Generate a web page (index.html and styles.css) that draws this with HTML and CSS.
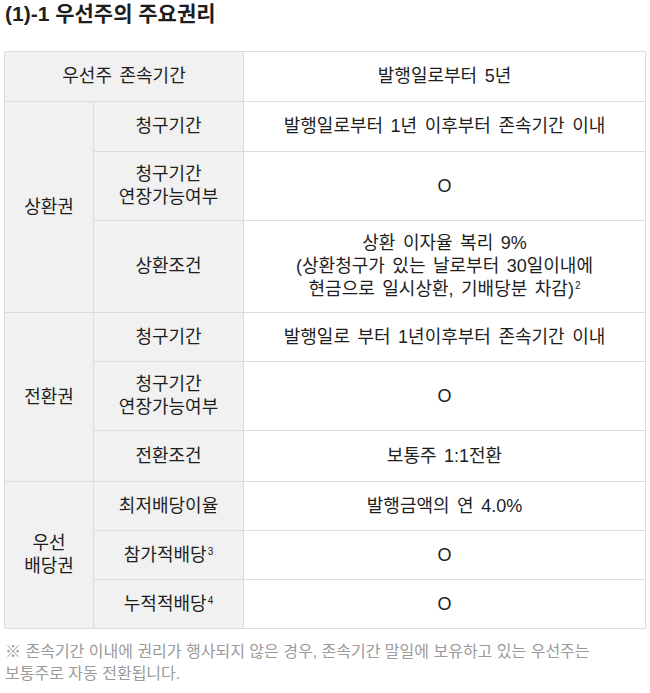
FILE: index.html
```html
<!DOCTYPE html>
<html lang="ko">
<head>
<meta charset="utf-8">
<title>우선주의 주요권리</title>
<link rel="stylesheet" href="styles.css">
</head>
<body>
<div class="page">
  <h2 class="title">(1)-1 우선주의 주요권리</h2>
  <table class="rights">
    <colgroup>
      <col class="c1"><col class="c2"><col class="c3">
    </colgroup>
    <tbody>
      <tr>
        <th colspan="2">우선주 존속기간</th>
        <td>발행일로부터 5년</td>
      </tr>
      <tr>
        <th rowspan="3">상환권</th>
        <th>청구기간</th>
        <td>발행일로부터 1년 이후부터 존속기간 이내</td>
      </tr>
      <tr>
        <th>청구기간<br>연장가능여부</th>
        <td>O</td>
      </tr>
      <tr>
        <th>상환조건</th>
        <td>상환 이자율 복리 9%<br>(상환청구가 있는 날로부터 30일이내에<br>현금으로 일시상환, 기배당분 차감)<sup>2</sup></td>
      </tr>
      <tr class="short">
        <th rowspan="3">전환권</th>
        <th>청구기간</th>
        <td>발행일로 부터 1년이후부터 존속기간 이내</td>
      </tr>
      <tr>
        <th>청구기간<br>연장가능여부</th>
        <td>O</td>
      </tr>
      <tr class="tall">
        <th>전환조건</th>
        <td>보통주 1:1전환</td>
      </tr>
      <tr class="short">
        <th rowspan="3">우선<br>배당권</th>
        <th>최저배당이율</th>
        <td>발행금액의 연 4.0%</td>
      </tr>
      <tr class="short">
        <th>참가적배당<sup>3</sup></th>
        <td>O</td>
      </tr>
      <tr class="short">
        <th>누적적배당<sup>4</sup></th>
        <td>O</td>
      </tr>
    </tbody>
  </table>
  <p class="note">※ 존속기간 이내에 권리가 행사되지 않은 경우, 존속기간 말일에 보유하고 있는 우선주는<br>보통주로 자동 전환됩니다.</p>
</div>
</body>
</html>
```
FILE: styles.css
```css
html, body {
  margin: 0;
  padding: 0;
  background: #ffffff;
}

.page {
  padding: 0 5px 0 4px;
  font-family: "Liberation Sans", "Noto Sans CJK KR", sans-serif;
  color: #1e1e1e;
}

.title {
  margin: 0 0 23px 1px;
  font-size: 21px;
  line-height: 28px;
  font-weight: bold;
  color: #1e1e1e;
}

.rights {
  width: 641px;
  border-collapse: collapse;
  table-layout: fixed;
  font-size: 18px;
  line-height: 23px;
  word-spacing: 2.5px;
}

.rights .c1 { width: 89px; }
.rights .c2 { width: 150px; }
.rights .c3 { width: 402px; }

.rights th,
.rights td {
  border: 1px solid #dcdcdc;
  padding: 11px 2px;
  height: 50px;
  box-sizing: border-box;
  text-align: center;
  vertical-align: middle;
  color: #1e1e1e;
}

.rights .short th,
.rights .short td {
  height: 49px;
}

.rights .tall th,
.rights .tall td {
  height: 51px;
}

.rights th {
  background: #f1f1f1;
  font-weight: normal;
}

.rights td {
  background: #ffffff;
}

.rights sup {
  font-size: 10px;
  line-height: 0;
  vertical-align: 6px;
  margin-left: 1px;
}

.note {
  margin: 12px 0 0 1px;
  font-size: 16px;
  line-height: 22px;
  color: #9a9a9a;
}
```
